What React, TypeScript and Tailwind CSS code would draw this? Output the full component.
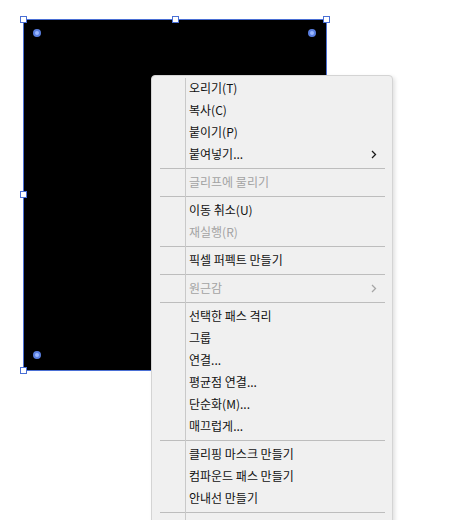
import React from "react";

type Item =
  | { kind: "sep" }
  | { kind: "item"; label: string; disabled?: boolean; submenu?: boolean };

const items: Item[] = [
  { kind: "item", label: "오리기(T)" },
  { kind: "item", label: "복사(C)" },
  { kind: "item", label: "붙이기(P)" },
  { kind: "item", label: "붙여넣기...", submenu: true },
  { kind: "sep" },
  { kind: "item", label: "글리프에 물리기", disabled: true },
  { kind: "sep" },
  { kind: "item", label: "이동 취소(U)" },
  { kind: "item", label: "재실행(R)", disabled: true },
  { kind: "sep" },
  { kind: "item", label: "픽셀 퍼펙트 만들기" },
  { kind: "sep" },
  { kind: "item", label: "원근감", disabled: true, submenu: true },
  { kind: "sep" },
  { kind: "item", label: "선택한 패스 격리" },
  { kind: "item", label: "그룹" },
  { kind: "item", label: "연결..." },
  { kind: "item", label: "평균점 연결..." },
  { kind: "item", label: "단순화(M)..." },
  { kind: "item", label: "매끄럽게..." },
  { kind: "sep" },
  { kind: "item", label: "클리핑 마스크 만들기" },
  { kind: "item", label: "컴파운드 패스 만들기" },
  { kind: "item", label: "안내선 만들기" },
  { kind: "sep" },
];

const Handle = ({ className }: { className: string }) => (
  <div
    className={`absolute w-[7px] h-[7px] bg-white border border-[#4a6fd4] ${className}`}
  />
);

const CornerDot = ({ className }: { className: string }) => (
  <div
    className={`absolute w-[8px] h-[8px] rounded-full bg-[#9bb8ff] border-2 border-[#5a7fe0] ${className}`}
  />
);

const Chevron = ({ disabled }: { disabled?: boolean }) => (
  <svg width="6" height="9" viewBox="0 0 6 9" className="mr-[15px]">
    <path
      d="M1 1 L4.5 4.5 L1 8"
      fill="none"
      stroke={disabled ? "#a6a6a6" : "#1a1a1a"}
      strokeWidth="1.3"
    />
  </svg>
);

export default function App() {
  return (
    <div className="relative w-[454px] h-[520px] overflow-hidden bg-white font-['Noto_Sans_CJK_KR','Noto_Sans',sans-serif]">
      {/* selected shape on the artboard, handles sit on its bounding box */}
      <div className="absolute left-[23px] top-[19px] w-[304px] h-[352px] bg-black border border-[#4a6fd4]">
        <Handle className="-left-[4px] -top-[4px]" />
        <Handle className="left-[148px] -top-[4px]" />
        <Handle className="-right-[4px] -top-[4px]" />
        <Handle className="-left-[4px] top-[171px]" />
        <Handle className="-left-[4px] -bottom-[4px]" />
        <CornerDot className="left-[9px] top-[9px]" />
        <CornerDot className="right-[10px] top-[9px]" />
        <CornerDot className="left-[9px] bottom-[11px]" />
      </div>

      {/* context menu */}
      <div className="absolute left-[151px] top-[75px] w-[242px] pt-[1px] pb-[20px] bg-[#f0f0f0] border border-[#d4d4d4] rounded-[4px] shadow-[2px_2px_4px_rgba(0,0,0,0.12)] text-[12px] leading-none">
        <div className="absolute left-[33px] top-[2px] bottom-0 w-px bg-[#c9c9c9]" />
        {items.map((it, i) =>
          it.kind === "sep" ? (
            <div key={i} className="h-[6px] flex items-center pl-[8px] pr-[7px]">
              <div className="h-px w-full bg-[#bdbdbd]" />
            </div>
          ) : (
            <div
              key={i}
              className={`h-[22px] flex items-center justify-between pl-[37px] ${
                it.disabled ? "text-[#a3a3a3]" : "text-[#111]"
              }`}
            >
              <span>{it.label}</span>
              {it.submenu && <Chevron disabled={it.disabled} />}
            </div>
          )
        )}
      </div>
    </div>
  );
}
